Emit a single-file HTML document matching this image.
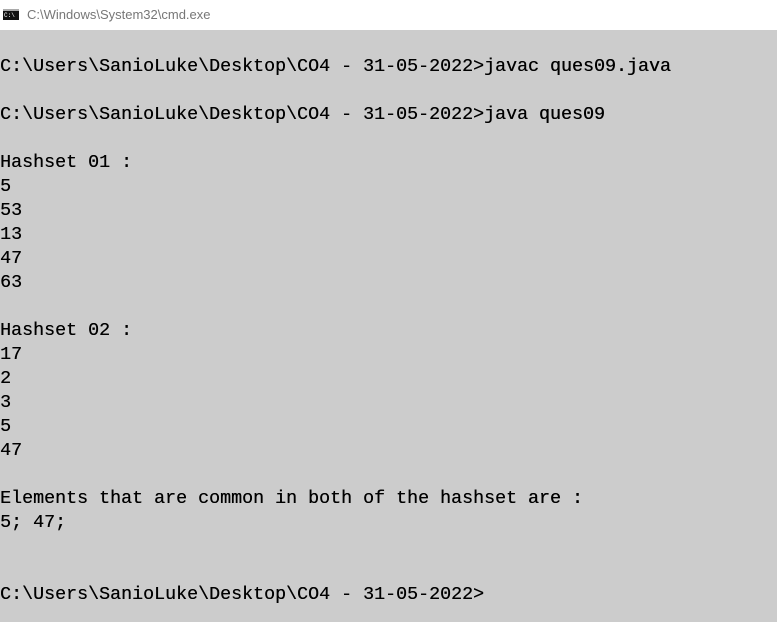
<html><head><style>
body{margin:0;width:777px;height:622px;overflow:hidden;background:#ccc;}
.t{height:30px;background:#fff;position:relative;font-family:"Liberation Sans",sans-serif;font-size:13px;color:#777;}
.t span{position:absolute;left:27px;top:7px;}
.ic{position:absolute;left:3px;top:9px;width:16px;height:11px;background:#111;border-top:2px solid #aaa;box-sizing:border-box}
.ic:after{content:"C:\\";color:#fff;font-size:6px;position:absolute;left:1px;top:1px;font-family:"Liberation Mono",monospace}
pre{margin:0;padding-top:25px;font-family:"Liberation Mono",monospace;font-size:18.33px;line-height:24px;color:#000;text-shadow:0.3px 0 0 #000;}
</style></head><body>
<div class="t"><div class="ic"></div><span>C:\Windows\System32\cmd.exe</span></div>
<pre>C:\Users\SanioLuke\Desktop\CO4 - 31-05-2022&gt;javac ques09.java

C:\Users\SanioLuke\Desktop\CO4 - 31-05-2022&gt;java ques09

Hashset 01 :
5
53
13
47
63

Hashset 02 :
17
2
3
5
47

Elements that are common in both of the hashset are :
5; 47;


C:\Users\SanioLuke\Desktop\CO4 - 31-05-2022&gt;</pre>
</body></html>
